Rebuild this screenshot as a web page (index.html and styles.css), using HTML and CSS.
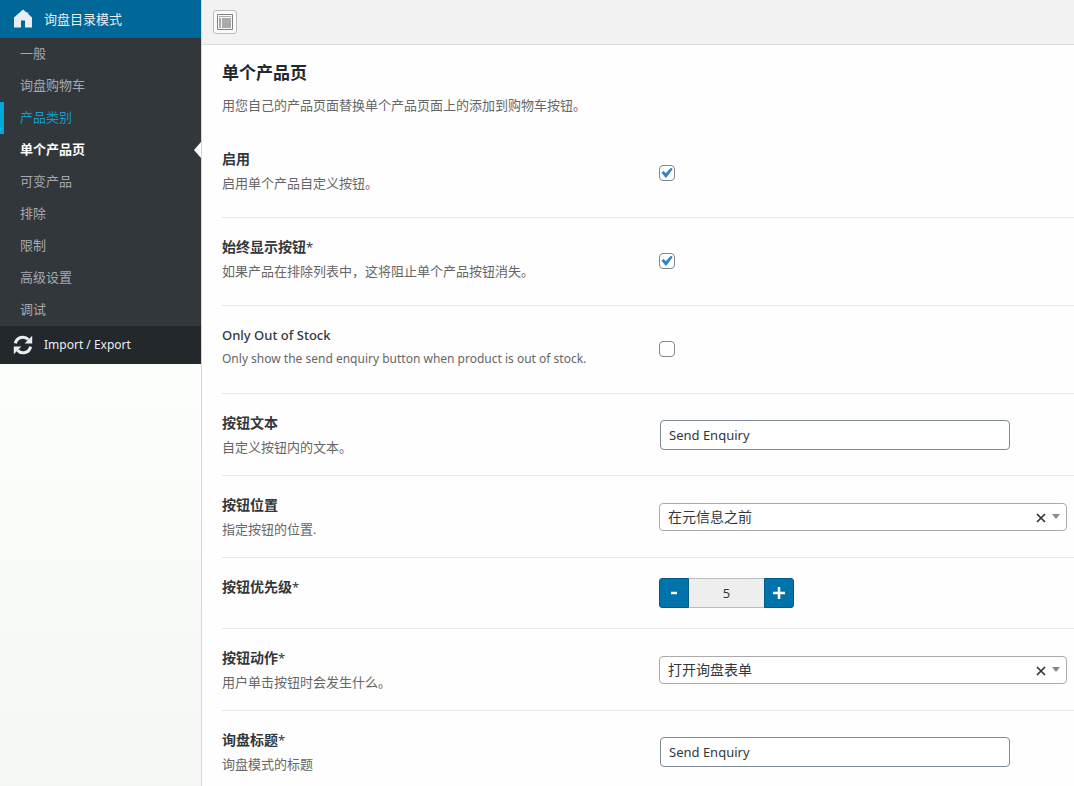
FILE: index.html
```html
<!DOCTYPE html>
<html lang="zh-CN">
<head>
<meta charset="utf-8">
<meta name="viewport" content="width=device-width, initial-scale=1">
<title>单个产品页</title>
<link rel="stylesheet" href="styles.css">
</head>
<body>
<div class="panel">
  <aside class="sidebar">
    <nav class="menu">
      <a class="menu-head" href="#">
        <svg class="menu-icon" viewBox="0 0 20 20" aria-hidden="true"><path fill="currentColor" d="M10 0.4 L13.6 3.6 L15.2 3.6 V5 L19 8.4 V18.4 H12 V11.4 H8 V18.4 H1 V8.4 Z"/></svg>
        <span>询盘目录模式</span>
      </a>
      <ul class="menu-list">
        <li><a class="menu-link" href="#">一般</a></li>
        <li><a class="menu-link" href="#">询盘购物车</a></li>
        <li><a class="menu-link is-hover" href="#">产品类别</a></li>
        <li><a class="menu-link is-active" href="#" aria-current="page">单个产品页</a></li>
        <li><a class="menu-link" href="#">可变产品</a></li>
        <li><a class="menu-link" href="#">排除</a></li>
        <li><a class="menu-link" href="#">限制</a></li>
        <li><a class="menu-link" href="#">高级设置</a></li>
        <li><a class="menu-link" href="#">调试</a></li>
      </ul>
      <a class="menu-head menu-head-dark" href="#">
        <svg class="menu-icon" viewBox="0 0 20 20" aria-hidden="true"><path fill="none" stroke="currentColor" stroke-width="3" d="M2.4 8.4 A7.6 7.6 0 0 1 15.4 4.6 M17.6 11.6 A7.6 7.6 0 0 1 4.6 15.4"/><path fill="currentColor" d="M19.2 0.8 V8.4 H11.6 Z M0.8 19.2 V11.6 H8.4 Z"/></svg>
        <span class="latin">Import / Export</span>
      </a>
    </nav>
  </aside>

  <main class="main">
    <header class="toolbar">
      <button class="expand" type="button" aria-label="展开选项">
        <svg viewBox="0 0 16 16" aria-hidden="true"><path fill="none" stroke="#808080" d="M0.5 0.5 H15.5 V15.5 H0.5 Z"/><path fill="#aaa" d="M2 2 H14 V3 H2 Z M2 4 H4 V14 H2 Z M5 4 H14 V14 H5 Z"/></svg>
      </button>
    </header>

    <form class="section">
      <h2 class="section-title">单个产品页</h2>
      <p class="section-desc">用您自己的产品页面替换单个产品页面上的添加到购物车按钮。</p>

      <div class="row row-check">
        <div><label class="label" for="enable">启用</label><p class="hint">启用单个产品自定义按钮。</p></div>
        <div><input class="check" id="enable" type="checkbox" checked></div>
      </div>
      <div class="row row-check">
        <div><label class="label" for="always">始终显示按钮<span class="star">*</span></label><p class="hint">如果产品在排除列表中，这将阻止单个产品按钮消失。</p></div>
        <div><input class="check" id="always" type="checkbox" checked></div>
      </div>
      <div class="row row-check">
        <div><label class="label label-latin" for="stock">Only Out of Stock</label><p class="hint latin">Only show the send enquiry button when product is out of stock.</p></div>
        <div><input class="check" id="stock" type="checkbox"></div>
      </div>
      <div class="row">
        <div><label class="label" for="text">按钮文本</label><p class="hint">自定义按钮内的文本。</p></div>
        <div><input class="text" id="text" type="text" value="Send Enquiry"></div>
      </div>
      <div class="row">
        <div><label class="label" for="position">按钮位置</label><p class="hint">指定按钮的位置.</p></div>
        <div class="select-wrap">
          <select class="select" id="position"><option>在元信息之前</option></select>
          <span class="select-tools"><button class="clear" type="button" aria-label="清除"><svg viewBox="0 0 10 10" aria-hidden="true"><path d="M1 1 L9 9 M9 1 L1 9"/></svg></button><i class="caret"></i></span>
        </div>
      </div>
      <div class="row">
        <div><label class="label" for="priority">按钮优先级<span class="star">*</span></label></div>
        <div class="stepper">
          <button class="step step-minus" type="button" aria-label="减少"><svg viewBox="0 0 12 12" aria-hidden="true"><path d="M3 6 H9"/></svg></button>
          <input class="step-value" id="priority" type="text" value="5">
          <button class="step step-plus" type="button" aria-label="增加"><svg viewBox="0 0 12 12" aria-hidden="true"><path d="M0 6 H12 M6 0 V12"/></svg></button>
        </div>
      </div>
      <div class="row">
        <div><label class="label" for="action">按钮动作<span class="star">*</span></label><p class="hint">用户单击按钮时会发生什么。</p></div>
        <div class="select-wrap">
          <select class="select" id="action"><option>打开询盘表单</option></select>
          <span class="select-tools"><button class="clear" type="button" aria-label="清除"><svg viewBox="0 0 10 10" aria-hidden="true"><path d="M1 1 L9 9 M9 1 L1 9"/></svg></button><i class="caret"></i></span>
        </div>
      </div>
      <div class="row">
        <div><label class="label" for="title">询盘标题<span class="star">*</span></label><p class="hint">询盘模式的标题</p></div>
        <div><input class="text" id="title" type="text" value="Send Enquiry"></div>
      </div>
    </form>
  </main>
</div>
</body>
</html>
```

FILE: styles.css
```css
* { box-sizing: border-box; }

body {
  margin: 0;
  color: #32373c;
  background: #fefefe;
  font: 13px/18px "Noto Sans", "Noto Sans CJK SC", sans-serif;
}

input, select, button { font: inherit; color: inherit; margin: 0; }
p, h2, ul { margin: 0; padding: 0; }
ul { list-style: none; }
svg { display: block; }
.latin { font-size: 12px; }

.panel { display: flex; height: 100vh; overflow: hidden; }

/* Sidebar */
.sidebar {
  flex: none;
  width: 202px;
  border-right: 1px solid #d5d6d7;
  background: linear-gradient(#fcfefc 46%, #f5f7f5);
}
.menu { background: #32373c; }
.menu-head {
  display: flex;
  align-items: center;
  gap: 11px;
  height: 38px;
  padding: 0 13px;
  color: #e8eef1;
  background: #006799;
  text-decoration: none;
}
.menu-head-dark { background: #23282d; }
.menu-icon { width: 20px; height: 20px; }
.menu-link {
  position: relative;
  display: block;
  padding: 0 16px 2px;
  border-left: 4px solid transparent;
  color: #a5a9ad;
  line-height: 30px;
  text-decoration: none;
}
.is-hover { border-color: #00a9dc; color: #159cc9; }
.is-active { color: #fff; font-weight: 700; }
.is-active::after {
  content: "";
  position: absolute;
  right: 0;
  top: 8px;
  border: 8px solid transparent;
  border-left-width: 0;
  border-right: 7px solid #fefefe;
}

/* Main column */
.main { flex: 1; min-width: 0; }
.toolbar {
  height: 45px;
  padding: 10px 11px;
  border-bottom: 1px solid #dcdcdc;
  background: #f2f2f2;
}
.expand {
  display: grid;
  place-items: center;
  width: 24px;
  height: 24px;
  padding: 0;
  border: 1px solid #bbb;
  border-radius: 3px;
  background: #fafafa;
}
.expand svg { width: 16px; height: 16px; }

.section { padding: 16px 0 0 20px; }
.section-title { color: #23282d; font-size: 17px; line-height: 24px; }
.section-desc { margin: 11px 0 16px; color: #666; }

.row {
  display: grid;
  grid-template-columns: minmax(0, 437px) minmax(0, 1fr);
  align-items: center;
  padding: 20px 0;
  border-bottom: 1px solid #e7e7e7;
}
.row > :first-child { align-self: start; }
.row-check { min-height: 88px; padding-bottom: 22px; }
.label { display: block; font-size: 14px; font-weight: 700; line-height: 18px; }
.label-latin { font-size: 13px; font-weight: 500; }
.star { font-size: 13px; font-weight: 400; }
.hint { margin-top: 7px; color: #666; line-height: 16px; }

/* Controls */
.check {
  appearance: none;
  display: grid;
  place-items: center;
  width: 16px;
  height: 16px;
  border: 1px solid #7e8993;
  border-radius: 4px;
  background: #fff;
}
.check:checked::before {
  content: "";
  width: 12px;
  height: 12px;
  background: #3582c4;
  clip-path: polygon(4% 50%, 22% 38%, 40% 56%, 82% 10%, 98% 20%, 46% 92%, 36% 92%);
}
.text {
  display: block;
  width: calc(100% - 1px);
  max-width: 350px;
  height: 30px;
  margin-left: 1px;
  padding: 0 8px;
  border: 1px solid #7e8993;
  border-radius: 4px;
  background: #fff;
}
.select-wrap { position: relative; margin-right: 7px; }
.select {
  appearance: none;
  display: block;
  width: 100%;
  height: 28px;
  padding: 0 48px 0 8px;
  border: 1px solid #aaa;
  border-radius: 4px;
  background: #fff;
  font-size: 14px;
}
.select-tools {
  position: absolute;
  right: 7px;
  top: 0;
  display: flex;
  align-items: center;
  gap: 6px;
  height: 28px;
}
.clear { padding: 3px 0 0; border: 0; background: none; }
.clear svg { width: 10px; height: 10px; fill: none; stroke: #333; stroke-width: 1.7; }
.caret { border: 4px solid transparent; border-top: 5px solid #888; border-bottom: 0; }

.stepper { display: flex; }
.step {
  display: grid;
  place-items: center;
  width: 30px;
  height: 30px;
  padding: 0;
  border: 1px solid #005a87;
  background: #0073aa;
}
.step-minus { border-radius: 3px 0 0 3px; }
.step-plus { border-radius: 0 3px 3px 0; }
.step svg { width: 12px; height: 12px; stroke: #fff; stroke-width: 2.5; }
.step-value {
  width: 75px;
  height: 30px;
  padding: 0;
  border: solid #bbb;
  border-width: 1px 0;
  border-radius: 0;
  background: #eee;
  text-align: center;
}
```
